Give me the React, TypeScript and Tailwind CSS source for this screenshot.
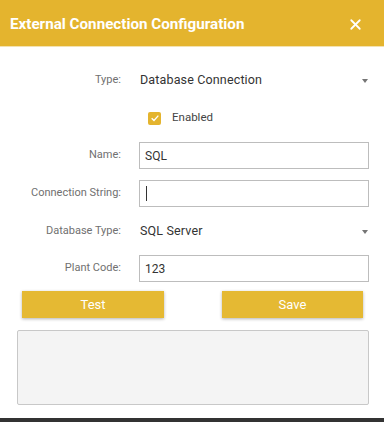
import { X } from "lucide-react";

function Label({ children }: { children: React.ReactNode }) {
  return (
    <div className="w-[121px] shrink-0 text-right text-[11px] text-[#707070]">
      {children}
    </div>
  );
}

function SelectRow({ label, value }: { label: string; value: string }) {
  return (
    <div className="flex h-[27px] items-center pr-[15px]">
      <Label>{label}</Label>
      <div className="ml-[19px] flex flex-1 items-center justify-between">
        <span className="text-[12.5px] tracking-[0.15px] text-[#333]">{value}</span>
        <span className="mr-[1px] h-0 w-0 border-x-[3.5px] border-t-[4px] border-x-transparent border-t-[#757575]" />
      </div>
    </div>
  );
}

function InputRow({ label, value, caret }: { label: string; value: string; caret?: boolean }) {
  return (
    <div className="flex h-[27px] items-center pr-[15px]">
      <Label>{label}</Label>
      <div className="ml-[18px] flex h-full flex-1 items-center border border-[#bdbdbd] px-[5px] text-[12px] text-[#333]">
        {value}
        {caret && <span className="ml-[1px] h-[15px] w-px bg-[#333]" />}
      </div>
    </div>
  );
}

export default function App() {
  return (
    <div className="flex h-[422px] w-[384px] flex-col bg-white font-['Roboto',sans-serif]">
      <div className="flex h-[47px] items-center justify-between border-b border-[#f3e2b0] bg-[#e4b42e] pl-[10px] pr-[20px] pt-[3px]">
        <span className="text-[15.2px] font-bold text-white">External Connection Configuration</span>
        <X className="h-[17px] w-[17px] text-white" strokeWidth={2.5} />
      </div>

      <div className="mt-[20px]">
        <SelectRow label="Type:" value="Database Connection" />
      </div>

      <div className="mt-[12px] flex h-[24px] items-center">
        <div className="ml-[148px] flex h-[13px] w-[13px] items-center justify-center rounded-[2px] bg-[#e4b42e]">
          <svg viewBox="0 0 12 12" className="h-[10px] w-[10px]" fill="none" stroke="white" strokeWidth="1.6">
            <path d="M2 6.2 L4.8 9 L10 3.2" />
          </svg>
        </div>
        <span className="ml-[11px] text-[11.5px] text-[#444]">Enabled</span>
      </div>

      <div className="mt-[12px]">
        <InputRow label="Name:" value="SQL" />
      </div>
      <div className="mt-[11px]">
        <InputRow label="Connection String:" value="" caret />
      </div>
      <div className="mt-[11px]">
        <SelectRow label="Database Type:" value="SQL Server" />
      </div>
      <div className="mt-[10px]">
        <InputRow label="Plant Code:" value="123" />
      </div>

      <div className="mt-[9px] flex justify-between pl-[22px] pr-[21px]">
        <button className="h-[27px] w-[142px] bg-[#e5b933] text-[13px] text-white shadow-[0_1px_3px_rgba(0,0,0,0.3)]">
          Test
        </button>
        <button className="h-[27px] w-[141px] bg-[#e5b933] text-[13px] text-white shadow-[0_1px_3px_rgba(0,0,0,0.3)]">
          Save
        </button>
      </div>

      <div className="mx-[17px] mt-[12px] h-[75px] w-[352px] rounded-[2px] border border-[#c8c8c8] bg-[#f4f4f4]" />

      <div className="flex-1" />
      <div className="h-[4px] bg-[#333]" />
    </div>
  );
}
